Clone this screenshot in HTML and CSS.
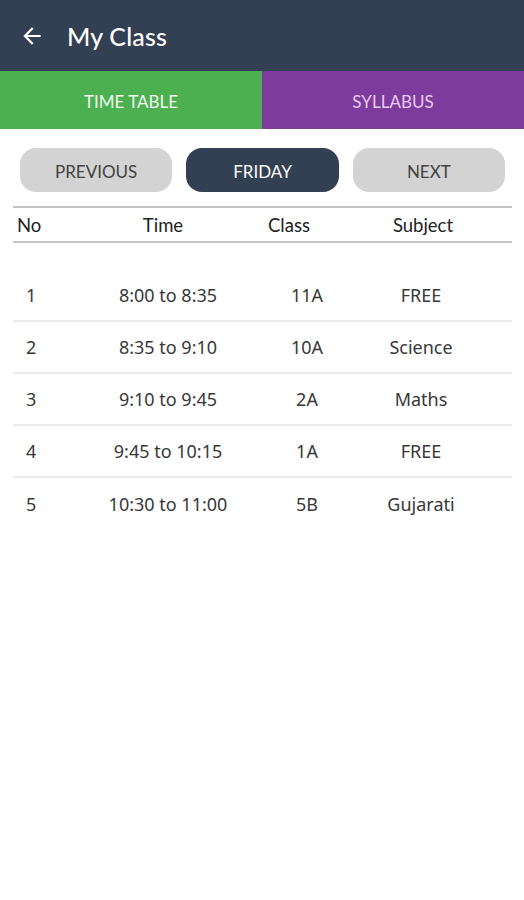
FILE: index.html
```html
<!DOCTYPE html>
<html>
<head>
<meta charset="utf-8">
<link rel="stylesheet" href="styles.css">
</head>
<body>
<div class="app">
  <header class="appbar">
    <svg class="back" width="26" height="26" viewBox="0 0 24 24"><path fill="#fff" d="M20 11H7.83l5.59-5.59L12 4l-8 8 8 8 1.41-1.41L7.83 13H20v-2z"/></svg>
    <h1 class="title">My Class</h1>
  </header>
  <nav class="tabs">
    <div class="tab tab-green">TIME TABLE</div>
    <div class="tab tab-purple">SYLLABUS</div>
  </nav>
  <div class="days">
    <div class="btn btn-grey">PREVIOUS</div>
    <div class="btn btn-dark">FRIDAY</div>
    <div class="btn btn-grey">NEXT</div>
  </div>
  <div class="table">
    <div class="thead">
      <div class="th th-no">No</div>
      <div class="th th-time">Time</div>
      <div class="th th-class">Class</div>
      <div class="th th-subj">Subject</div>
    </div>
    <div class="tbody">
      <div class="row"><div class="td td-no">1</div><div class="td">8:00 to 8:35</div><div class="td">11A</div><div class="td">FREE</div></div>
      <div class="row"><div class="td td-no">2</div><div class="td">8:35 to 9:10</div><div class="td">10A</div><div class="td">Science</div></div>
      <div class="row"><div class="td td-no">3</div><div class="td">9:10 to 9:45</div><div class="td">2A</div><div class="td">Maths</div></div>
      <div class="row"><div class="td td-no">4</div><div class="td">9:45 to 10:15</div><div class="td">1A</div><div class="td">FREE</div></div>
      <div class="row last"><div class="td td-no">5</div><div class="td">10:30 to 11:00</div><div class="td">5B</div><div class="td">Gujarati</div></div>
    </div>
  </div>
</div>
</body>
</html>
```
FILE: styles.css
```css
* { box-sizing: border-box; }
html, body { margin: 0; padding: 0; background: #fff; }
body { font-family: "Noto Sans", "Open Sans", sans-serif; width: 524px; }

.appbar {
  height: 71px;
  background: #333f52;
  display: flex;
  align-items: center;
  padding-left: 19px;
}
.back { display: block; margin-top: 1px; }
.title {
  margin: 0 0 0 22px;
  font-family: Lato, "Open Sans", sans-serif;
  font-weight: 500;
  font-size: 25px;
  color: #fff;
  letter-spacing: 0.2px;
}

.tabs { display: flex; height: 58px; }
.tab {
  flex: 1;
  display: flex;
  align-items: center;
  justify-content: center;
  font-family: Lato, "Open Sans", sans-serif;
  font-size: 17px;
  padding-top: 2px;
}
.tab-green { background: #4caf50; color: #eefaee; }
.tab-purple { background: #7d3c9b; color: #ecc8f5; }

.days {
  display: flex;
  gap: 14px;
  padding: 19px 19px 0 20px;
}
.btn {
  flex: 1;
  height: 44px;
  border-radius: 16px;
  display: flex;
  align-items: center;
  justify-content: center;
  font-family: Lato, "Open Sans", sans-serif;
  font-size: 17px;
  padding-top: 2px;
}
.btn-grey { background: #d3d3d3; color: #424242; }
.btn-dark { background: #333f52; color: #fff; }

.table { margin: 14px 12px 0 13px; }
.thead, .row {
  display: grid;
  grid-template-columns: 88px 134px 144px 84px 1fr;
  align-items: center;
}
.thead {
  height: 37px;
  border-top: 2px solid #c4c4c4;
  border-bottom: 2px solid #c4c4c4;
}
.th {
  font-family: Lato, "Open Sans", sans-serif;
  font-size: 18.5px;
  color: #222;
  text-align: center;
  padding-top: 1px;
}
.th-no { text-align: left; padding-left: 4px; }
.th-time { transform: translateX(-5px); }
.th-class { transform: translateX(-18px); }
.th-subj { transform: translateX(2px); }

.tbody { padding-top: 27px; }
.row {
  height: 52px;
  border-bottom: 2px solid #ececec;
}
.row.last { border-bottom: none; }
.td {
  font-size: 18px;
  color: #383838;
  text-align: center;
}
.td-no { text-align: left; padding-left: 13px; }
```
